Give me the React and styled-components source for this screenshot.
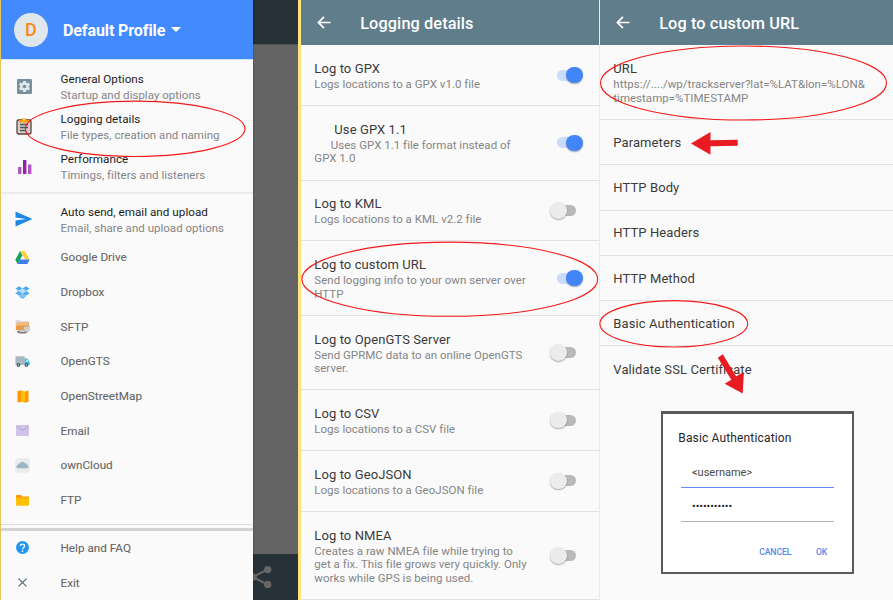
import React from 'react';
import styled, { createGlobalStyle, css } from 'styled-components';

const Global = createGlobalStyle`
  * { box-sizing: border-box; }
  body { margin: 0; font-family: Roboto, sans-serif; background: #fafafa; }
`;

const Page = styled.main`
  position: relative;
  display: grid;
  grid-template-columns: 298px 302px 293px;
  width: 893px;
  height: 600px;
  overflow: hidden;
  background: #fafafa;
`;

/* ---------- Drawer screen ---------- */
const DrawerScreen = styled.section`
  display: grid;
  grid-template-columns: 252px 1fr;
  height: 600px;
  border-left: 1px solid #ffe066;
`;
const Drawer = styled.nav`
  display: flex;
  flex-direction: column;
  z-index: 1;
  background: #fafafa;
  box-shadow: 0 0 2px rgba(0, 0, 0, 0.35);
`;
const Profile = styled.header`
  display: flex;
  align-items: center;
  flex: none;
  height: 60px;
  padding-left: 13px;
  background: #448aff;
  border-bottom: 1px solid #d9e0ea;
  color: #fff;
`;
const Avatar = styled.div`
  display: flex;
  align-items: center;
  justify-content: center;
  width: 34px;
  height: 34px;
  border-radius: 50%;
  background: #dfe7ec;
  color: #ff8610;
  font-size: 18px;
  font-weight: 500;
`;
const ProfileName = styled.span`
  margin-left: 15px;
  padding-top: 2px;
  font-size: 16px;
  font-weight: 700;
  letter-spacing: -0.1px;
`;
const Caret = styled.i`
  margin-left: 6px;
  border: 5px solid transparent;
  border-top-color: #fff;
  border-bottom: 0;
`;
const Group = styled.div`
  flex: none;
  padding: ${(p) => p.$pad || '0'};
  border-bottom: ${(p) => p.$line || '0'};
`;
const Item = styled.div`
  display: grid;
  grid-template-columns: 59.5px 1fr;
  align-items: center;
  height: ${(p) => (p.$compact ? '34.7px' : '40px')};
`;
const IconSlot = styled.span`
  display: flex;
  justify-content: center;
  width: ${(p) => (p.$compact ? '43px' : '46px')};
  padding-bottom: ${(p) => (p.$compact ? '0' : '2px')};
  svg { display: block; }
`;
const ItemText = styled.div`
  display: flex;
  flex-direction: column;
  line-height: 16px;
  white-space: nowrap;
`;
const ItemTitle = styled.span`
  font-size: 11.7px;
  letter-spacing: 0.02px;
  color: ${(p) => (p.$muted ? '#666' : '#1c1c1c')};
  ${(p) => p.$muted && css`-webkit-text-stroke: 0.1px #666;`}
`;
const ItemHint = styled.span`
  font-size: 11.5px;
  letter-spacing: 0.02px;
  color: #858585;
`;
const Backdrop = styled.div`
  display: grid;
  grid-template-rows: 45px 1fr 46px;
  background: #646464;
`;
const DimBar = styled.div`
  display: flex;
  align-items: center;
  background: #263238;
  border-bottom: ${(p) => (p.$top ? '1px solid #555' : '0')};
`;

/* ---------- Settings screens ---------- */
const Screen = styled.section`
  height: 600px;
  border-left: ${(p) => (p.$split ? '3px solid #ffe47c' : '0')};
  border-right: ${(p) => (p.$split ? '1px solid #ffebab' : '0')};
`;
const AppBar = styled.header`
  display: flex;
  align-items: center;
  height: 45px;
  padding: 2px 0 0 ${(p) => p.$inset};
  background: #607d8b;
  color: #fff;
  svg { margin-bottom: 2px; }
`;
const BarTitle = styled.h1`
  margin: 0 0 0 29.5px;
  font-size: 16.3px;
  font-weight: 500;
  letter-spacing: 0.11px;
`;
const Setting = styled.div`
  display: flex;
  align-items: center;
  justify-content: space-between;
  height: ${(p) => p.$h}px;
  padding: 0 17px 0 13.3px;
  border-bottom: ${(p) => (p.$last ? '0' : '1.4px solid #e2e2e2')};
`;
const SettingTitle = styled.div`
  padding-left: ${(p) => (p.$indent ? '20px' : 0)};
  font-size: 13px;
  line-height: 19px;
  letter-spacing: 0.1px;
  color: #3a3a3a;
  white-space: nowrap;
`;
const SettingHint = styled.div`
  font-size: 11.5px;
  line-height: 13.5px;
  letter-spacing: 0.02px;
  text-indent: ${(p) => (p.$indent ? '16.5px' : 0)};
  color: #858585;
  white-space: pre;
`;
const Switch = styled.span`
  display: flex;
  align-items: center;
  flex: none;
  width: 20px;
  height: 11px;
  margin-right: ${(p) => (p.$on ? '5.5px' : '6px')};
  border-radius: 6px;
  background: ${(p) => (p.$on ? '#cbdcfb' : '#b9b9b9')};
  justify-content: ${(p) => (p.$on ? 'flex-end' : 'flex-start')};
  &::after {
    content: '';
    flex: none;
    width: 16.5px;
    height: 16.5px;
    margin: 0 ${(p) => (p.$on ? '-6px' : '0')} 0 ${(p) => (p.$on ? '0' : '-6px')};
    border-radius: 50%;
    background: ${(p) => (p.$on ? '#4285f8' : '#ececec')};
    box-shadow: 0 1px 1.5px rgba(0, 0, 0, 0.33);
  }
`;

/* ---------- Dialog and annotations, over the screens ---------- */
const Dialog = styled.div`
  position: absolute;
  left: 661px;
  top: 411px;
  width: 193px;
  height: 163px;
  padding: 15px 15.3px 0;
  border: solid #5a5a5a;
  border-width: 3px 2px 2px;
  background: #fff;
`;
const DialogTitle = styled.h2`
  margin: 0;
  font-size: 12px;
  font-weight: 400;
  line-height: 18px;
  letter-spacing: 0.15px;
  color: #262626;
`;
const Field = styled.div`
  width: 153px;
  height: 34px;
  margin-left: 2.7px;
  padding-left: 11px;
  line-height: 16px;
  font-size: 11px;
  color: #484848;
  border-bottom: 1px solid ${(p) => (p.$active ? '#5b8df0' : '#b4b4b4')};
`;
const FirstField = styled(Field)`
  height: 41px;
  padding-top: 18px;
`;
const Dots = styled(Field)`
  line-height: 37px;
  font-size: 10.8px;
  color: #222;
`;
const Actions = styled.div`
  display: flex;
  justify-content: flex-end;
  gap: 24.5px;
  margin-top: 22px;
  padding-right: 9.5px;
  font-size: 8.7px;
  font-weight: 500;
  line-height: 16px;
  letter-spacing: -0.1px;
  color: #5389ee;
`;
const Marks = styled.svg`
  position: absolute;
  inset: 0;
  z-index: 2;
  pointer-events: none;
`;

/* ---------- Icons ---------- */
const S = ({ s = 14, box = '0 0 24 24', children }) => (
  <svg width={s} height={s} viewBox={box}>{children}</svg>
);
const Gear = () => (
  <S s={15} box="0 0 15 15">
    <rect width="15" height="15" rx="1.2" fill="#78909c" />
    <g fill="#dfe8ec" transform="translate(7.5 7.5)">
      {[0, 60, 120].map((a) => (
        <rect key={a} x="-1.5" y="-5.6" width="3" height="11.2" rx=".5" transform={`rotate(${a})`} />
      ))}
      <circle r="4.2" />
      <circle r="1.8" fill="#78909c" />
    </g>
  </S>
);
const Clipboard = () => (
  <svg width="16" height="18" viewBox="0 0 16 18">
    <rect x="1" y="3" width="14" height="14" rx="1.4" fill="#d9ccc8" stroke="#5d4037" strokeWidth="1.3" />
    <path d="M4 7.500h8M4 10.500h8M4 13.500h5.500" stroke="#455a64" strokeWidth="1.300" />
    <path d="M3 5.400V3h2.900a2.100 2.100 0 0 1 4.200 0H13v2.400z" fill="#ffa000" />
    <circle cx="8" cy="2.800" r=".8" fill="#fff3d0" />
  </svg>
);
const Bars = () => (
  <S s={15} box="0 0 15 15">
    <path d="M1 8h3.400v7H1zM11 5.500h3.400V15H11z" fill="#b455c6" />
    <path d="M6 1h3.400v14H6z" fill="#8e24aa" />
  </S>
);
const Send = () => (
  <svg width="18" height="16" viewBox="0 0 18 16"><path d="M.5.5 17.500 8 .5 15.500V9.600L11 8 .5 6.400z" fill="#1e88e5" /></svg>
);
const Drive = () => (
  <svg width="15" height="13" viewBox="0 0 15 13">
    <path d="M5.200 0 .3 8.700 2.600 13 7.500 4.200z" fill="#16a05d" />
    <path d="M5.200 0h4.700l4.800 8.600H10z" fill="#ffce42" />
    <path d="M5 8.600h9.700L12.400 13H2.600z" fill="#3d7df0" />
  </svg>
);
const Dropbox = () => (
  <svg width="15" height="13" viewBox="0 0 15 13">
    <path d="M4.300.2 7.500 2.600 3.700 5 .4 2.600zM10.700.2 7.500 2.600 11.300 5l3.300-2.400zM3.700 5 7.500 7.500 4.300 9.800.4 7.200zM11.300 5 7.500 7.500l3.200 2.300 3.900-2.600z" fill="#50abec" />
    <path d="M7.500 2.600 11.300 5 7.500 7.500 3.700 5z" fill="#b4dbf8" />
    <path d="M7.500 7.500 10.700 9.800v1.200L7.500 13l-3.200-2V9.800z" fill="#79c0f2" />
  </svg>
);
const Sftp = () => (
  <svg width="15" height="15" viewBox="0 0 15 15">
    <path d="M.5 1h4.800l1 1h7.500v8H.5z" fill="#ddd" />
    <ellipse cx="7.300" cy="12.800" rx="5.200" ry="1.800" fill="#777" />
    <ellipse cx="7.300" cy="12" rx="3.600" ry="1" fill="#ccc" />
    <path d="M1.800 3.600h12.400L13.300 11H.8z" fill="#ec9a45" />
    <path d="M2.200 4h11.300l-.4 2.500H1.900z" fill="#f7bd78" />
    <path d="M8.500 7.700 11 7.400l1-.8 1 .8 1.800.3c0 3.200-1 4.600-3 5.500-2-.9-3.300-2.500-3.300-5.500z" fill="#d0d0cc" stroke="#a39a8c" strokeWidth=".5" />
  </svg>
);
const Truck = () => (
  <svg width="15" height="11" viewBox="0 0 15 11">
    <rect x=".4" y=".3" width="9.400" height="8.600" rx=".7" fill="#a8b9c1" />
    <path d="M9.800 2.600h2.600L14.600 6v3H9.800z" fill="#29b6e8" />
    <path d="M11 3.600h1.400L13.600 6H11z" fill="#b5e8fa" />
    <circle cx="3.400" cy="8.900" r="1.900" fill="#455a64" /><circle cx="3.400" cy="8.900" r=".7" fill="#cfd8dc" />
    <circle cx="11.400" cy="8.900" r="1.900" fill="#455a64" /><circle cx="11.400" cy="8.900" r=".7" fill="#cfd8dc" />
  </svg>
);
const MapIcon = () => (
  <svg width="12" height="13" viewBox="0 0 12 13">
    <path d="M.5 1.200 4 .3v11.500l-3.500.9zM8 1.400l3.500-1v11.400l-3.500 1z" fill="#ff9800" />
    <path d="M4 .3 8 1.400v11.400l-4-1z" fill="#ffc107" />
  </svg>
);
const Mail = () => (
  <svg width="13" height="11" viewBox="0 0 13 11">
    <rect width="13" height="11" rx="1" fill="#d1c4e9" />
    <path d="m.7 1.300 5.800 4 5.800-4" fill="none" stroke="#b3a0d8" />
  </svg>
);
const Cloud = () => (
  <svg width="15" height="15" viewBox="0 0 15 15">
    <rect x=".2" y=".2" width="14.600" height="14.600" rx="2.600" fill="#ebebeb" />
    <path d="M2.600 10.200a1.700 1.700 0 0 1 .2-3.300A1.900 1.900 0 0 1 5 5.400a2.700 2.700 0 0 1 5 0 1.900 1.900 0 0 1 2.300 1.600 1.700 1.700 0 0 1 .3 3.200z" fill="#9db6c3" />
  </svg>
);
const Folder = () => (
  <svg width="13" height="11" viewBox="0 0 13 11">
    <path d="M0 1a1 1 0 0 1 1-1h4l1.300 1.400H12a1 1 0 0 1 1 1V9H0z" fill="#ff9800" />
    <rect y="2.400" width="13" height="8.400" rx="1" fill="#ffc107" />
  </svg>
);
const Help = () => (
  <S s={13}>
    <circle cx="12" cy="12" r="12" fill="#2196f3" />
    <path d="M8.200 9.400c0-5 7.600-5 7.600-.4 0 2.900-3.600 3-3.600 6" fill="none" stroke="#fff" strokeWidth="2.400" />
    <circle cx="12.100" cy="18.500" r="1.600" fill="#fff" />
  </S>
);
const Close = () => (
  <S s={9} box="0 0 9 9"><path d="m.6.6 7.800 7.800M8.400.6.6 8.400" stroke="#546e7a" strokeWidth="1.300" /></S>
);
const Back = () => (
  <svg width="14" height="13" viewBox="0 0 14 13">
    <path d="M13.500 6.500H1.500M7 .9 1.400 6.500 7 12.100" fill="none" stroke="#fff" strokeWidth="1.700" />
  </svg>
);
const Share = () => (
  <svg width="20" height="24" viewBox="0 0 20 24">
    <path d="M14.500 4.500 0 12l14.500 7.500" fill="none" stroke="#666" strokeWidth="2" />
    <circle cx="0" cy="12" r="3.700" fill="#666" />
    <circle cx="14.700" cy="4.600" r="3.700" fill="#666" />
    <circle cx="14.700" cy="19.400" r="3.700" fill="#666" />
  </svg>
);

const mainItems = [
  [Gear, 'General Options', 'Startup and display options'],
  [Clipboard, 'Logging details', 'File types, creation and naming'],
  [Bars, 'Performance', 'Timings, filters and listeners'],
];
const targets = [
  [Drive, 'Google Drive'], [Dropbox, 'Dropbox'], [Sftp, 'SFTP'], [Truck, 'OpenGTS'],
  [MapIcon, 'OpenStreetMap'], [Mail, 'Email'], [Cloud, 'ownCloud'], [Folder, 'FTP'],
];
const logSettings = [
  { t: 'Log to GPX', d: 'Logs locations to a GPX v1.0 file', h: 61, on: true },
  { t: 'Use GPX 1.1', d: 'Uses GPX 1.1 file format instead of\nGPX 1.0', h: 74.7, on: true, indent: true },
  { t: 'Log to KML', d: 'Logs locations to a KML v2.2 file', h: 60.8 },
  { t: 'Log to custom URL', d: 'Send logging info to your own server over\nHTTP', h: 74.5, on: true },
  { t: 'Log to OpenGTS Server', d: 'Send GPRMC data to an online OpenGTS\nserver.', h: 74.5 },
  { t: 'Log to CSV', d: 'Logs locations to a CSV file', h: 60.5 },
  { t: 'Log to GeoJSON', d: 'Logs locations to a GeoJSON file', h: 61 },
  { t: 'Log to NMEA', d: 'Creates a raw NMEA file while trying to\nget a fix. This file grows very quickly. Only\nworks while GPS is being used.', h: 88 },
];
const urlSettings = ['Parameters', 'HTTP Body', 'HTTP Headers', 'HTTP Method', 'Basic Authentication', 'Validate SSL Certificate'];

function DrawerItem({ icon: Icon, title, hint }) {
  return (
    <Item $compact={!hint}>
      <IconSlot $compact={!hint}><Icon /></IconSlot>
      <ItemText>
        <ItemTitle $muted={!hint}>{title}</ItemTitle>
        {hint && <ItemHint>{hint}</ItemHint>}
      </ItemText>
    </Item>
  );
}

export default function App() {
  return (
    <Page>
      <Global />
      <DrawerScreen>
        <Drawer>
          <Profile><Avatar>D</Avatar><ProfileName>Default Profile</ProfileName><Caret /></Profile>
          <Group $pad="7px 0 5px" $line="2px solid #ebebeb">
            {mainItems.map(([i, t, h]) => <DrawerItem key={t} icon={i} title={t} hint={h} />)}
          </Group>
          <Group $pad="6px 0 6px" $line="1px solid #dcdcdc">
            <DrawerItem icon={Send} title="Auto send, email and upload" hint="Email, share and upload options" />
            {targets.map(([i, t]) => <DrawerItem key={t} icon={i} title={t} />)}
          </Group>
          <Group $pad="3px 0 0" $line="3px solid #d3d3d3" />
          <Group>
            <DrawerItem icon={Help} title="Help and FAQ" />
            <DrawerItem icon={Close} title="Exit" />
          </Group>
        </Drawer>
        <Backdrop><DimBar $top /><div /><DimBar><Share /></DimBar></Backdrop>
      </DrawerScreen>

      <Screen $split>
        <AppBar $inset="15.7px"><Back /><BarTitle>Logging details</BarTitle></AppBar>
        {logSettings.map((s) => (
          <Setting key={s.t} $h={s.h}>
            <div>
              <SettingTitle $indent={s.indent}>{s.t}</SettingTitle>
              <SettingHint $indent={s.indent}>{s.d}</SettingHint>
            </div>
            <Switch $on={s.on} />
          </Setting>
        ))}
      </Screen>

      <Screen>
        <AppBar $inset="15.7px"><Back /><BarTitle>Log to custom URL</BarTitle></AppBar>
        <Setting $h={75}>
          <div>
            <SettingTitle>URL</SettingTitle>
            <SettingHint>{'https://..../wp/trackserver?lat=%LAT&lon=%LON&\ntimestamp=%TIMESTAMP'}</SettingHint>
          </div>
        </Setting>
        {urlSettings.map((t, i) => (
          <Setting key={t} $h={45.3} $last={i === urlSettings.length - 1}><SettingTitle>{t}</SettingTitle></Setting>
        ))}
      </Screen>

      <Dialog>
        <DialogTitle>Basic Authentication</DialogTitle>
        <FirstField $active>&lt;username&gt;</FirstField>
        <Dots>•••••••••••</Dots>
        <Actions><span>CANCEL</span><span>OK</span></Actions>
      </Dialog>

      <Marks width="893" height="600" viewBox="0 0 893 600">
        <g fill="none" stroke="#f51818" strokeWidth="1.100">
          <ellipse cx="135.200" cy="128.800" rx="109.800" ry="27.700" />
          <ellipse cx="449.800" cy="279.200" rx="147.900" ry="37.100" />
          <ellipse cx="743.500" cy="83" rx="143" ry="37" />
          <ellipse cx="673.800" cy="323.800" rx="73.900" ry="23.200" />
        </g>
        <g fill="#e81b23">
          <path d="m691 143.500 19.500-11.500v8.300l27.200-.6v6l-27.200.5v8.500z" />
          <path d="m742.700 393.500-18-9.800 6.600-3.900-13.500-22.100 5-3.400 13.300 22 7.800-4.300z" />
        </g>
      </Marks>
    </Page>
  );
}
